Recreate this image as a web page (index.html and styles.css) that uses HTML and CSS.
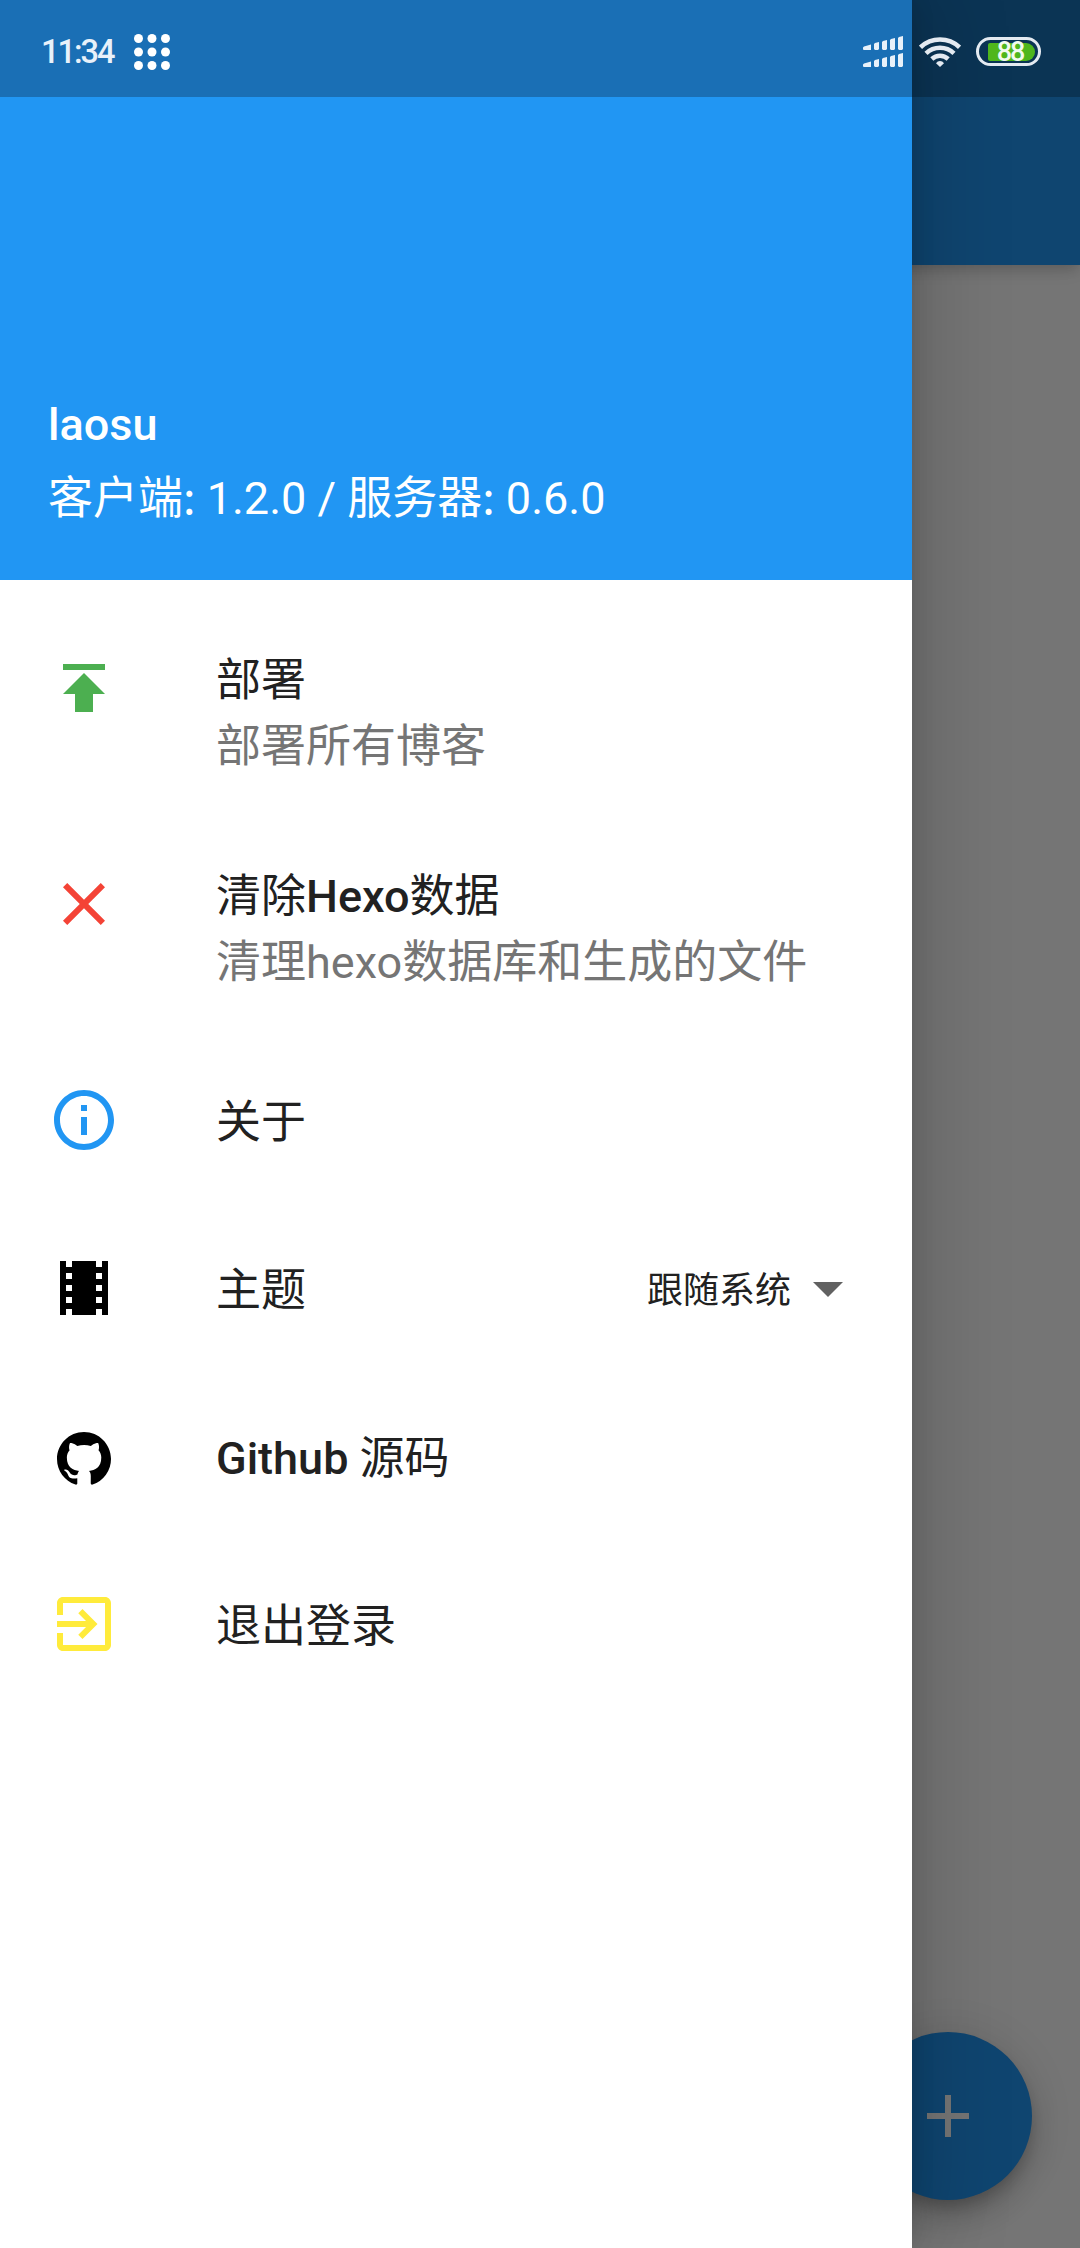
FILE: index.html
```html
<!DOCTYPE html>
<html lang="zh-CN">
<head>
<meta charset="utf-8">
<title>Hexo</title>
<link rel="stylesheet" href="styles.css">
</head>
<body>
<div class="screen">
  <main class="page">
    <div class="app-bar"></div>
    <button class="fab" aria-label="新建">
      <svg class="icon" viewBox="0 0 24 24"><path fill="#fff" d="M19 13h-6v6h-2v-6H5v-2h6V5h2v6h6v2z"/></svg>
    </button>
  </main>
  <div class="scrim"></div>
  <aside class="drawer">
    <header class="drawer-header">
      <div class="account-name">laosu</div>
      <div class="account-info">客户端<span class="colon">:</span> 1.2.0 / 服务器<span class="colon">:</span> 0.6.0</div>
    </header>
    <nav class="menu">
      <div class="item item-tall">
        <svg class="icon" viewBox="0 0 24 24"><path fill="#4caf50" d="M5 4v2h14V4H5zm0 10h4v6h6v-6h4l-7-7-7 7z"/></svg>
        <div class="label"><div class="title">部署</div><div class="subtitle">部署所有博客</div></div>
      </div>
      <div class="item item-tall">
        <svg class="icon" viewBox="0 0 24 24"><path fill="#f44336" d="M19 6.41L17.59 5 12 10.59 6.41 5 5 6.41 10.59 12 5 17.59 6.41 19 12 13.41 17.59 19 19 17.59 13.41 12z"/></svg>
        <div class="label"><div class="title">清除<span class="latin">Hexo</span>数据</div><div class="subtitle">清理hexo数据库和生成的文件</div></div>
      </div>
      <div class="item">
        <svg class="icon" viewBox="0 0 24 24"><path fill="#2196f3" d="M11 17h2v-6h-2v6zm1-15C6.48 2 2 6.48 2 12s4.480 10 10 10 10-4.480 10-10S17.520 2 12 2zm0 18c-4.410 0-8-3.590-8-8s3.590-8 8-8 8 3.590 8 8-3.590 8-8 8zM11 9h2V7h-2v2z"/></svg>
        <div class="label"><div class="title">关于</div></div>
      </div>
      <div class="item">
        <svg class="icon" viewBox="0 0 24 24"><path d="M18 3v2h-2V3H8v2H6V3H4v18h2v-2h2v2h8v-2h2v2h2V3h-2zM8 17H6v-2h2v2zm0-4H6v-2h2v2zm0-4H6V7h2v2zm10 8h-2v-2h2v2zm0-4h-2v-2h2v2zm0-4h-2V7h2v2z"/></svg>
        <div class="label"><div class="title">主题</div></div>
        <div class="dropdown"><span class="dropdown-value">跟随系统</span><svg class="icon" viewBox="0 0 24 24"><path fill="#616161" d="M7 10l5 5 5-5z"/></svg></div>
      </div>
      <div class="item">
        <svg class="icon icon-github" viewBox="0 0 16 16"><path d="M8 0C3.58 0 0 3.58 0 8c0 3.54 2.29 6.53 5.47 7.59.4.07.55-.17.55-.38 0-.19-.01-.82-.01-1.49-2.01.37-2.53-.49-2.69-.94-.09-.23-.48-.94-.82-1.13-.28-.15-.68-.52-.01-.53.63-.01 1.08.58 1.23.82.72 1.21 1.87.87 2.33.66.07-.52.28-.87.51-1.07-1.78-.2-3.64-.89-3.64-3.95 0-.87.31-1.59.82-2.15-.08-.2-.36-1.02.08-2.12 0 0 .67-.21 2.2.82.64-.18 1.32-.27 2-.27s1.36.09 2 .27c1.53-1.04 2.2-.82 2.2-.82.44 1.1.16 1.92.08 2.12.51.56.82 1.27.82 2.15 0 3.07-1.87 3.75-3.65 3.95.29.25.54.73.54 1.48 0 1.07-.01 1.93-.01 2.2 0 .21.15.46.55.38A8.01 8.01 0 0 0 16 8c0-4.42-3.58-8-8-8z"/></svg>
        <div class="label"><div class="title"><span class="latin">Github</span> 源码</div></div>
      </div>
      <div class="item">
        <svg class="icon" viewBox="0 0 24 24"><path fill="#ffeb3b" d="M10.090 15.590L11.500 17l5-5-5-5-1.410 1.410L12.670 11H3v2h9.670l-2.580 2.590zM19 3H5c-1.110 0-2 .9-2 2v4h2V5h14v14H5v-4H3v4c0 1.100.890 2 2 2h14c1.100 0 2-.9 2-2V5c0-1.100-.9-2-2-2z"/></svg>
        <div class="label"><div class="title">退出登录</div></div>
      </div>
    </nav>
  </aside>
  <div class="status-bar">
    <span class="clock">11:34</span>
    <svg class="dots" viewBox="0 0 36 36" fill="#fff"><circle cx="4.500" cy="4.500" r="4.500"/><circle cx="18" cy="4.500" r="4.500"/><circle cx="31.500" cy="4.500" r="4.500"/><circle cx="4.500" cy="18" r="4.500"/><circle cx="18" cy="18" r="4.500"/><circle cx="31.500" cy="18" r="4.500"/><circle cx="4.500" cy="31.500" r="4.500"/><circle cx="18" cy="31.500" r="4.500"/><circle cx="31.500" cy="31.500" r="4.500"/></svg>
    <svg class="signal" viewBox="0 0 40 31" fill="#e8f1fa"><path id="bars" d="M0 11.500L1 10.500L8 8.500V14H1Q0 14 0 13zM11 8L12 7L16 6V13L15 14H12L11 13zM19 6L20 5L24 4V13L23 14H20L19 13zM27 4L28 3L32 2V13L31 14H28L27 13zM35 2L36 1L40 0V13L39 14H36L35 13z"/><use href="#bars" y="17"/></svg>
    <svg class="wifi" viewBox="0 0 42 30" fill="none" stroke="#e4eaf1" stroke-width="4.500"><path d="M1.500 10.300A28.500 28.500 0 0 1 40.500 10.300M7 16.300A20.400 20.400 0 0 1 35 16.300M12.800 22A12 12 0 0 1 29.200 22"/><path d="M21 24q2.500 0 4 2.200L21 30l-4-3.800Q18.500 24 21 24z" fill="#e4eaf1" stroke="none"/></svg>
    <div class="battery"><div class="charge">88</div></div>
  </div>
</div>
</body>
</html>
```

FILE: styles.css
```css
* { box-sizing: border-box; }
body { margin: 0; }

.screen {
  position: relative;
  width: 1080px;
  height: 2248px;
  overflow: hidden;
  font-family: Roboto, "Noto Sans CJK SC", sans-serif;
  color: #212121;
}

.page {
  display: flex;
  flex-direction: column;
  justify-content: space-between;
  height: 100%;
  background: #fff;
}
.app-bar {
  height: 265px;
  background: linear-gradient(#1a71b7 97px, #2196f3 97px);
  box-shadow: 0 6px 12px -3px rgba(0, 0, 0, .14), 0 9px 15px rgba(0, 0, 0, .05), 0 3px 24px rgba(0, 0, 0, .05);
}
.fab {
  display: grid;
  place-items: center;
  align-self: flex-end;
  width: 168px;
  height: 168px;
  margin: 0 48px 48px;
  padding: 0;
  border: 0;
  border-radius: 50%;
  background: #2196f3;
  box-shadow: 0 9px 15px -3px rgba(0, 0, 0, .2), 0 18px 30px rgba(0, 0, 0, .14), 0 3px 54px rgba(0, 0, 0, .12);
}

.scrim {
  position: absolute;
  inset: 0;
  background: rgba(0, 0, 0, .54);
}

.drawer {
  position: absolute;
  inset: 0 auto 0 0;
  width: 912px;
  background: #fff;
  box-shadow: 0 0 24px -3px rgba(0, 0, 0, .16), 0 0 90px 6px rgba(0, 0, 0, .2);
}
.drawer-header {
  display: flex;
  flex-direction: column;
  justify-content: flex-end;
  height: 580px;
  padding: 0 48px 44px;
  background: linear-gradient(#1a6fb5 97px, #2196f3 97px);
  color: #fff;
  font-size: 45px;
}
.account-name { line-height: 75px; font-weight: 500; }
.account-info { line-height: 74px; white-space: nowrap; }
.colon { font-family: "Noto Sans CJK SC", sans-serif; line-height: 1; }

.menu { padding-top: 24px; }
.item {
  display: flex;
  align-items: center;
  height: 168px;
  padding: 0 48px;
}
.item-tall {
  align-items: flex-start;
  height: 216px;
  padding-top: 48px;
}
.icon { display: block; flex: none; width: 72px; height: 72px; }
.icon-github { padding: 9px; margin-top: 5px; }
.label { flex: 1; margin-left: 96px; padding-top: 5px; font-size: 45px; white-space: nowrap; }
.title, .subtitle { line-height: 66px; }
.item-tall .label { margin-top: -6px; padding-top: 2px; }
.latin { font-weight: 500; }
.subtitle { color: #757575; }
.dropdown { display: flex; align-items: center; gap: 1px; font-size: 36px; }
.dropdown-value { padding-bottom: 2px; }

.status-bar {
  position: absolute;
  inset: 0 0 auto;
  display: flex;
  align-items: center;
  height: 97px;
  padding: 6px 39px 0 41px;
  color: #e8f1fa;
}
.clock { width: 93px; font-size: 32.500px; font-weight: 500; letter-spacing: -2px; }
.dots { width: 36px; height: 36px; }
.signal { width: 40px; height: 31px; margin-left: auto; }
.wifi { width: 42px; height: 30px; margin-left: 16px; }
.battery {
  width: 65px;
  height: 29px;
  margin-left: 15px;
  padding: 3px 3px 2px 9px;
  border: 3px solid #e4eaf1;
  border-radius: 15px;
}
.charge {
  height: 18px;
  padding-right: 3px;
  border-radius: 2px 9px 9px 2px;
  background: #4fb61c;
  color: #f1faef;
  font-size: 27px;
  font-weight: 500;
  line-height: 19px;
  letter-spacing: -2px;
  text-align: center;
}
```
